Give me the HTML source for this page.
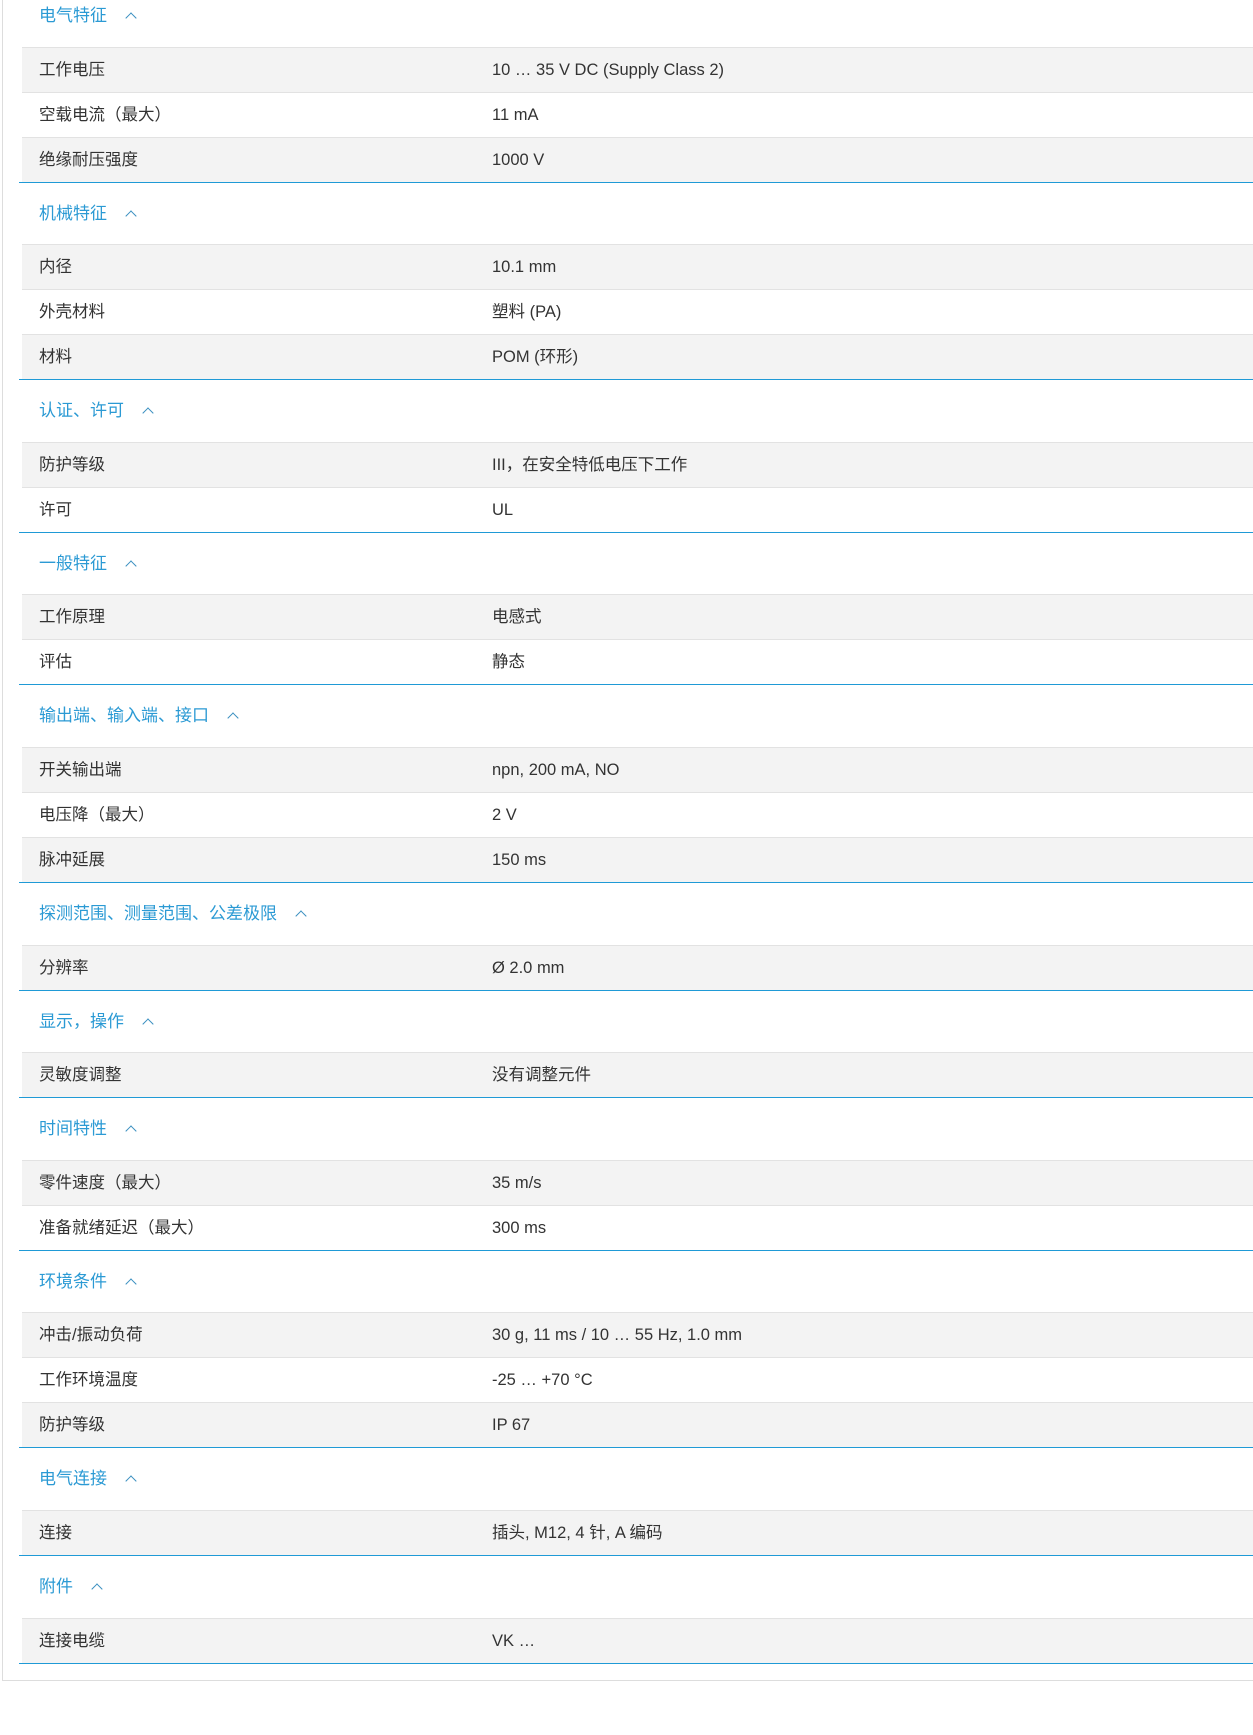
<!DOCTYPE html>
<html><head><meta charset="utf-8"><style>
html,body{margin:0;padding:0;background:#fff;width:1253px;height:1735px;overflow:hidden}
body{font-family:"Liberation Sans","Noto Sans CJK SC",sans-serif;color:#333;font-size:16.5px}
.box{position:absolute;left:2px;top:-20px;width:1260px;height:1700px;border-left:1px solid #ddd;border-bottom:1px solid #ddd}
.wrap{position:absolute;left:19px;top:-15px;width:1240px}
.sec{border-bottom:1.5px solid #1f9ad6}
.hd{height:61.6px;line-height:61px;padding-left:20px;color:#2b9ad4;font-size:17px}
.hd i{display:inline-block;width:7px;height:7px;border-left:1.3px solid #3a8fc0;border-top:1.3px solid #3a8fc0;transform:rotate(45deg);margin-left:20px;position:relative;top:1px}
.r{margin-left:3px;height:44px;line-height:44px;border-top:1px solid #e2e2e2;position:relative}
.r:nth-child(even){background:#f3f3f3}
.r span{position:absolute;left:17px}
.r b{position:absolute;left:470px;font-weight:normal}
</style></head><body>
<div class="box"></div>
<div class="wrap">
<div class="sec"><div class="hd">电气特征<i></i></div>
<div class="r"><span>工作电压</span><b>10 … 35 V DC (Supply Class 2)</b></div>
<div class="r"><span>空载电流（最大）</span><b>11 mA</b></div>
<div class="r"><span>绝缘耐压强度</span><b>1000 V</b></div></div>
<div class="sec"><div class="hd">机械特征<i></i></div>
<div class="r"><span>内径</span><b>10.1 mm</b></div>
<div class="r"><span>外壳材料</span><b>塑料 (PA)</b></div>
<div class="r"><span>材料</span><b>POM (环形)</b></div></div>
<div class="sec"><div class="hd">认证、许可<i></i></div>
<div class="r"><span>防护等级</span><b>III，在安全特低电压下工作</b></div>
<div class="r"><span>许可</span><b>UL</b></div></div>
<div class="sec"><div class="hd">一般特征<i></i></div>
<div class="r"><span>工作原理</span><b>电感式</b></div>
<div class="r"><span>评估</span><b>静态</b></div></div>
<div class="sec"><div class="hd">输出端、输入端、接口<i></i></div>
<div class="r"><span>开关输出端</span><b>npn, 200 mA, NO</b></div>
<div class="r"><span>电压降（最大）</span><b>2 V</b></div>
<div class="r"><span>脉冲延展</span><b>150 ms</b></div></div>
<div class="sec"><div class="hd">探测范围、测量范围、公差极限<i></i></div>
<div class="r"><span>分辨率</span><b>Ø 2.0 mm</b></div></div>
<div class="sec"><div class="hd">显示，操作<i></i></div>
<div class="r"><span>灵敏度调整</span><b>没有调整元件</b></div></div>
<div class="sec"><div class="hd">时间特性<i></i></div>
<div class="r"><span>零件速度（最大）</span><b>35 m/s</b></div>
<div class="r"><span>准备就绪延迟（最大）</span><b>300 ms</b></div></div>
<div class="sec"><div class="hd">环境条件<i></i></div>
<div class="r"><span>冲击/振动负荷</span><b>30 g, 11 ms / 10 … 55 Hz, 1.0 mm</b></div>
<div class="r"><span>工作环境温度</span><b>-25 … +70 °C</b></div>
<div class="r"><span>防护等级</span><b>IP 67</b></div></div>
<div class="sec"><div class="hd">电气连接<i></i></div>
<div class="r"><span>连接</span><b>插头, M12, 4 针, A 编码</b></div></div>
<div class="sec"><div class="hd">附件<i></i></div>
<div class="r"><span>连接电缆</span><b>VK …</b></div></div>
</div>
</body></html>
